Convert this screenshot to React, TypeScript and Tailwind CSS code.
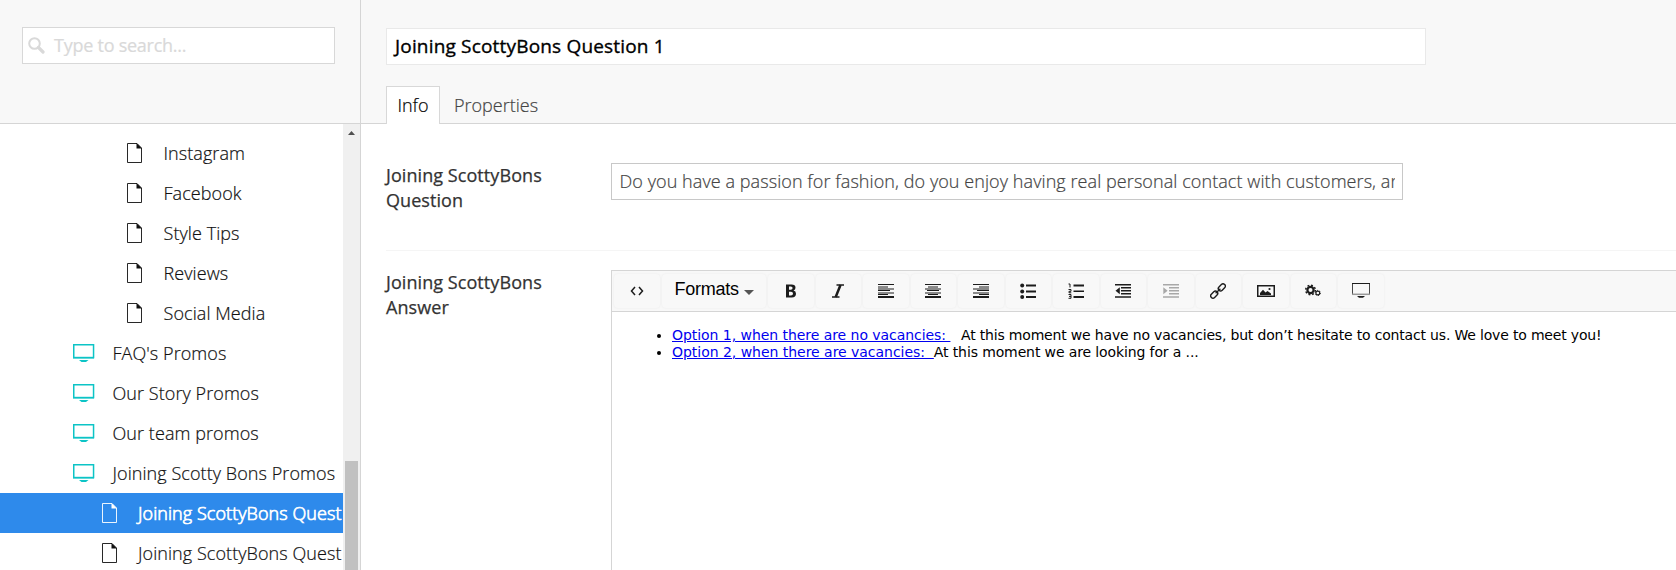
import type { ReactNode } from "react";

const pages = ["Instagram", "Facebook", "Style Tips", "Reviews", "Social Media"];
const promos = ["FAQ's Promos", "Our Story Promos", "Our team promos", "Joining Scotty Bons Promos"];

function FileIcon() {
  return (
    <svg width="15" height="20" viewBox="0 0 15 20" className="shrink-0">
      <path d="M.5 .5H10L14.500 5V19.500H.5Z" fill="none" stroke="currentColor" strokeOpacity=".9" />
      <path d="M9.500 0L15 5.500H9.500Z" fill="currentColor" />
    </svg>
  );
}

function MonitorIcon() {
  return (
    <svg width="22" height="18" viewBox="0 0 22 18" className="shrink-0 text-[#0cc4c6]">
      <rect x=".75" y=".75" width="19.800" height="12.800" fill="none" stroke="currentColor" strokeWidth="1.500" />
      <path d="M0 14.500H21" stroke="currentColor" strokeOpacity=".5" />
      <path d="M6 16H15.500L13 18H8.500Z" fill="currentColor" />
    </svg>
  );
}

function Tool({ children, dim = false }: { children: ReactNode; dim?: boolean }) {
  return (
    <button
      className={
        "flex h-[34px] w-[45.5px] shrink-0 items-center justify-center rounded-[4px] bg-[#f8f8f8] pb-px shadow-[0_0_2px_#e8e8e8] " +
        (dim ? "text-[#a8a8a8]" : "text-[#1c1c1c]")
      }
    >
      {children}
    </button>
  );
}

function AlignIcon({ at }: { at: "left" | "center" | "right" }) {
  const rows: [number, number, number][] = [[0, 16, 1], [2, 10, 0.5], [4, 16, 0.5], [6, 12, 1], [8, 16, 0.5], [10, 10, 1], [12, 16, 1]];
  return (
    <svg width="16" height="14" viewBox="0 0 16 14" shapeRendering="crispEdges">
      {rows.map(([y, w, o]) => (
        <rect
          key={y}
          x={at === "left" ? 0 : at === "right" ? 16 - w : (16 - w) / 2}
          y={y}
          width={w}
          height={y === 12 ? 2 : o === 1 ? 1.3 : 2}
          fill="currentColor"
          opacity={o === 1 ? 1 : 0.5}
        />
      ))}
    </svg>
  );
}

function DentIcon({ dir }: { dir: "in" | "out" }) {
  return (
    <svg width="16" height="14" viewBox="0 0 16 14" fill="currentColor">
      <path d="M0 0H16V1.500H0ZM6 3H16V4.500H6ZM6 6H16V7.500H6ZM6 9H16V10.500H6ZM0 12.200H16V13.700H0Z" />
      <path d={dir === "out" ? "M4.800 3.200V10.200L.5 6.700Z" : "M.3 3.200V10.200L4.600 6.700Z"} />
    </svg>
  );
}

function Toolbar() {
  return (
    <div className="flex h-[41px] items-center gap-[2px] border-b border-[#d5d5d5] bg-[#f8f8f8] pl-[2px]">
      <Tool>
        <svg width="14" height="10" viewBox="0 0 14 10" fill="none" stroke="currentColor" strokeWidth="1.500">
          <path d="M5 1L1.500 5L5 9M9 1L12.500 5L9 9" />
        </svg>
      </Tool>
      <button className="flex h-[34px] w-[104.500px] shrink-0 items-center rounded-[4px] bg-[#f8f8f8] pl-[13px] text-black shadow-[0_0_2px_#e8e8e8]">
        <span className="-mt-[4px] font-['Liberation_Sans'] text-[18px] leading-5 tracking-[-0.25px]">Formats</span>
        <svg width="10" height="5" viewBox="0 0 10 5" className="ml-[5px] mt-[2px]">
          <path d="M0 0H10L5 5Z" fill="#555" />
        </svg>
      </button>
      <Tool>
        <svg width="12" height="14" viewBox="0 0 12 14">
          <path
            fillRule="evenodd"
            fill="currentColor"
            d="M1 .5H6.500Q10.500 .5 10.500 3.800Q10.500 6 8.500 6.600Q11 7.200 11 9.800Q11 13.500 6.800 13.500H1ZM4 2.500V5.800H5.800Q7.600 5.800 7.600 4.100Q7.600 2.500 5.800 2.500ZM4 7.800V11.500H6Q8 11.500 8 9.600Q8 7.800 6 7.800Z"
          />
        </svg>
      </Tool>
      <Tool>
        <svg width="12" height="14" viewBox="0 0 12 14" fill="none" stroke="currentColor">
          <path d="M4.500 1H12M0 13H7.500" strokeWidth="1.300" />
          <path d="M8.500 1L3.700 13" strokeWidth="2.500" />
        </svg>
      </Tool>
      <Tool><AlignIcon at="left" /></Tool>
      <Tool><AlignIcon at="center" /></Tool>
      <Tool><AlignIcon at="right" /></Tool>
      <Tool>
        <svg width="16" height="16" viewBox="0 0 16 16" fill="currentColor">
          <circle cx="2.200" cy="2.500" r="2" />
          <circle cx="2.200" cy="8.500" r="2" />
          <circle cx="2.200" cy="14" r="2" />
          <path d="M6 1.500H16V3.500H6ZM6 7.500H16V9.500H6ZM6 13H16V15H6Z" />
        </svg>
      </Tool>
      <Tool>
        <svg width="16" height="16" viewBox="0 0 16 16">
          <path d="M5.500 1.500H16V3.500H5.500ZM5.500 7.500H16V9H5.500ZM5.500 13H16V15H5.500Z" fill="currentColor" />
          <path d="M.5 1H2V4.500M.5 6.500H3V8.300H1V9.800H3.300M.5 11.500H3V15.300H.5M1 13.400H3" fill="none" stroke="currentColor" />
        </svg>
      </Tool>
      <Tool><DentIcon dir="out" /></Tool>
      <Tool dim><DentIcon dir="in" /></Tool>
      <Tool>
        <svg width="16" height="16" viewBox="0 0 16 16" fill="none" stroke="currentColor" strokeWidth="1.400">
          <rect x="-4" y="-2.300" width="8" height="4.600" rx="2.300" transform="translate(4.200 11.600) rotate(-45)" />
          <rect x="-4" y="-2.300" width="8" height="4.600" rx="2.300" transform="translate(11.800 4.400) rotate(-45)" />
          <path d="M5.600 10.200L10.400 5.800" />
        </svg>
      </Tool>
      <Tool>
        <svg width="18" height="12" viewBox="0 0 18 12">
          <rect x=".75" y=".75" width="16.500" height="10.500" fill="none" stroke="currentColor" strokeWidth="1.500" />
          <path d="M3 10V8L6 4.800L8.500 7.500L10.500 6L14 8.500V10Z" fill="currentColor" />
          <circle cx="12.500" cy="4" r="1.100" fill="currentColor" />
        </svg>
      </Tool>
      <Tool>
        <svg width="16" height="13" viewBox="0 0 16 13" fill="none" stroke="currentColor">
          <circle cx="5.500" cy="6" r="3.100" strokeWidth="2.200" />
          <circle cx="5.500" cy="6" r="4.800" strokeWidth="1.500" strokeDasharray="1.900 1.870" />
          <circle cx="12.800" cy="9" r="1.900" strokeWidth="1.200" />
          <circle cx="12.800" cy="9" r="2.600" strokeWidth="1" strokeDasharray="1.200 1.520" />
        </svg>
      </Tool>
      <Tool>
        <svg width="18" height="15" viewBox="0 0 18 15">
          <path d="M.5 11V.5H17.500V11" fill="none" stroke="currentColor" strokeOpacity=".8" />
          <path d="M0 .5H18" stroke="currentColor" />
          <path d="M0 11.300H18" stroke="#999" strokeWidth="1.500" />
          <path d="M5 13H13L11 14.800H7Z" fill="currentColor" />
        </svg>
      </Tool>
    </div>
  );
}

function Sidebar() {
  return (
    <aside className="flex w-[361px] shrink-0 flex-col border-r border-[#d5d5d5]">
      <div className="h-[124px] shrink-0 border-b border-[#d5d5d5] bg-[#f8f8f8] pl-[22px] pt-[27px]">
        <div className="flex h-[37px] w-[313px] items-center border border-[#d8d8d8] bg-white pl-[5px] text-[#d9d9d9]">
          <svg width="17" height="17" viewBox="0 0 17 17" fill="none" stroke="currentColor">
            <circle cx="6.500" cy="6.500" r="5.300" strokeWidth="2" />
            <path d="M10.500 10.500L15 15" strokeWidth="3.200" strokeLinecap="round" />
          </svg>
          <span className="ml-[9px] text-[18px] tracking-[-0.25px] [-webkit-text-stroke:0.2px]">Type to search...</span>
        </div>
      </div>
      <div className="flex min-h-0 grow">
        <div className="w-[343px] shrink-0 overflow-hidden whitespace-nowrap pt-[9px] text-[18px] font-light tracking-[0.07px] text-[#111] [-webkit-text-stroke:0.2px]">
          {pages.map((p) => (
            <div key={p} className="flex h-10 items-center pl-[127px]">
              <FileIcon />
              <span className="ml-[21.500px]">{p}</span>
            </div>
          ))}
          {promos.map((p) => (
            <div key={p} className="flex h-10 items-center pl-[73px]">
              <MonitorIcon />
              <span className="ml-[17.500px]">{p}</span>
            </div>
          ))}
          <div className="flex h-10 items-center bg-[#2e8aeb] pl-[102px] text-white">
            <FileIcon />
            <span className="ml-[21px] [-webkit-text-stroke:0.7px]">Joining ScottyBons Quest</span>
          </div>
          <div className="flex h-10 items-center pl-[102px]">
            <FileIcon />
            <span className="ml-[21px]">Joining ScottyBons Quest</span>
          </div>
        </div>
        <div className="flex w-[17px] flex-col items-center bg-[#f0f0f0] pt-[7px]">
          <svg width="7" height="4" viewBox="0 0 7 4">
            <path d="M3.500 0L7 4H0Z" fill="#505050" />
          </svg>
          <div className="mt-[326px] w-[13px] grow bg-[#c1c1c1]" />
        </div>
      </div>
    </aside>
  );
}

function FieldLabel({ children }: { children: ReactNode }) {
  return (
    <div className="w-[225px] shrink-0 text-[18px] leading-[25px] tracking-[0.07px] text-[#333] [-webkit-text-stroke:0.25px]">
      Joining ScottyBons
      <br />
      {children}
    </div>
  );
}

export default function App() {
  return (
    <div className="flex h-[570px] w-[1676px] overflow-hidden bg-white font-['Open_Sans',sans-serif]">
      <Sidebar />
      <main className="flex min-w-0 grow flex-col">
        <header className="flex h-[124px] shrink-0 flex-col justify-between border-b border-[#d5d5d5] bg-[#f8f8f8] pl-[25px] pt-[28px]">
          <div className="flex h-[37px] w-[1040px] items-center border border-[#e9e9e9] bg-white pb-px pl-2 text-[19px] tracking-[0.18px] text-black [-webkit-text-stroke:0.35px]">
            Joining ScottyBons Question 1
          </div>
          <div className="-mb-px flex h-[38px] text-[18px] font-light [-webkit-text-stroke:0.2px]">
            <div className="flex w-[54px] items-center justify-center border border-b-0 border-[#d8d8d8] bg-white text-black">Info</div>
            <div className="flex items-center pl-[14px] text-[#444]">Properties</div>
          </div>
        </header>
        <div className="flex min-h-0 grow flex-col pl-[25px]">
          <section className="flex h-[127px] shrink-0 border-b border-[#f5f5f5] pt-[39px]">
            <FieldLabel>Question</FieldLabel>
            <div className="flex h-[37px] w-[792px] items-center border border-[#c8c8c8] pl-[7.500px] pr-[7px] text-[18px] font-light tracking-[0.075px] text-[#444] [-webkit-text-stroke:0.2px]">
              <div className="overflow-hidden whitespace-nowrap">
                Do you have a passion for fashion, do you enjoy having real personal contact with customers, and
              </div>
            </div>
          </section>
          <section className="flex min-h-0 grow pt-[19px]">
            <FieldLabel>Answer</FieldLabel>
            <div className="min-w-0 grow border-l border-t border-[#d5d5d5]">
              <Toolbar />
              <ul className="list-disc whitespace-pre pl-[60px] pt-[15px] font-['DejaVu_Sans'] text-[14px] leading-[17px] text-black">
                <li>
                  <a className="tracking-[-0.05px] text-[#0000ee] underline">{"Option 1, when there are no vacancies:\u00a0"}</a>
                  <span className="ml-[2px] tracking-[-0.18px]">{"\u00a0 At this moment we have no vacancies, but don’t hesitate to contact us. We love to meet you!"}</span>
                </li>
                <li>
                  <a className="tracking-[-0.03px] text-[#0000ee] underline">{"Option 2, when there are vacancies:\u00a0 "}</a>
                  <span className="tracking-[-0.12px]">At this moment we are looking for a ...</span>
                </li>
              </ul>
            </div>
          </section>
        </div>
      </main>
    </div>
  );
}
